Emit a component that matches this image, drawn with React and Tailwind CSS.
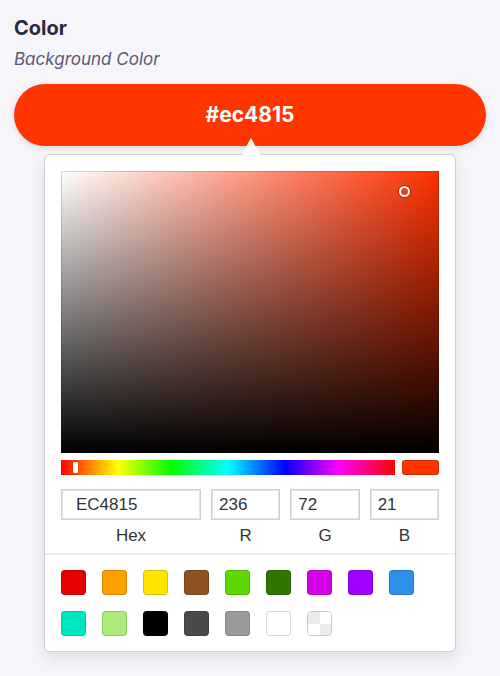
const swatches = [
  '#e60000', '#ff9f00', '#ffe500', '#8e5220', '#5fd800', '#2e7600', '#d600e6', '#a000ff', '#2e90e8',
  '#00e6c0', '#aeea7a', '#000000', '#4a4a4a', '#9b9b9b', '#ffffff',
]

function Field({ value, label, wide }) {
  return (
    <div className={wide ? 'w-[140px]' : 'flex-1'}>
      <div
        className={`flex h-[31px] items-center border border-[#cfcfcf] bg-white text-[17px] text-[#333] shadow-[inset_0_0_0_1px_#e4e4e4] ${
          wide ? 'pl-[14px]' : 'pl-[7px]'
        }`}
      >
        {value}
      </div>
      <div className="mt-[6px] text-center text-[17px] leading-[20px] text-[#333]">{label}</div>
    </div>
  )
}

export default function App() {
  return (
    <div className="min-h-screen bg-[#f5f5fa] px-[14px] pt-[14px] font-['Inter',sans-serif]">
      <h2 className="text-[20px] font-bold leading-[28px] text-[#2b2a3f]">Color</h2>
      <p className="mt-[5px] text-[17px] italic leading-[24px] text-[#5b5873]">Background Color</p>

      <button className="mt-[13px] flex h-[62px] w-full items-center justify-center rounded-full bg-[#ff3500] text-[21px] font-bold text-white shadow-[0_2px_6px_rgba(0,0,0,0.12)]">
        #ec4815
      </button>

      <div className="relative mx-[30px] mt-[8px] rounded-[6px] border border-[#d0d0d4] bg-white font-['Liberation_Sans',Arial,sans-serif] shadow-[0_6px_16px_rgba(0,0,0,0.1)]">
        <div className="absolute -top-[17px] left-[196px] h-0 w-0 border-x-[10px] border-b-[18px] border-x-transparent border-b-white" />

        <div className="px-[16px] pt-[16px] pb-[7px]">
          <div className="relative h-[282px] bg-[#ff3000]">
            <div className="absolute inset-0 bg-[linear-gradient(to_right,#fff,rgba(255,255,255,0))]" />
            <div className="absolute inset-0 bg-[linear-gradient(to_top,#000,rgba(0,0,0,0))] shadow-[inset_0_0_0_1px_rgba(0,0,0,0.15)]" />
            <div className="absolute left-[338px] top-[15px] h-[11px] w-[11px] rounded-full border-2 border-white shadow-[0_0_0_1px_rgba(0,0,0,0.35)]" />
          </div>

          <div className="mt-[7px] flex h-[15px] gap-[7px]">
            <div className="relative flex-1 bg-[linear-gradient(to_right,#f00_0%,#ff0_17%,#0f0_33%,#0ff_50%,#00f_67%,#f0f_83%,#f00_100%)]">
              <div className="absolute left-[12px] top-[2px] h-[11px] w-[5px] rounded-[1px] bg-white shadow-[0_0_1px_rgba(0,0,0,0.6)]" />
            </div>
            <div className="w-[37px] rounded-[3px] bg-[#ff3500] shadow-[inset_0_0_0_1px_rgba(0,0,0,0.18)]" />
          </div>

          <div className="mt-[14px] flex gap-[10px]">
            <Field value="EC4815" label="Hex" wide />
            <Field value="236" label="R" />
            <Field value="72" label="G" />
            <Field value="21" label="B" />
          </div>
        </div>

        <div className="border-t-2 border-[#efeff2] px-[16px] pt-[15px] pb-[15px]">
          <div className="flex flex-wrap gap-x-[16px] gap-y-[16px]">
            {swatches.map((c) => (
              <div
                key={c}
                className="h-[25px] w-[25px] rounded-[4px] shadow-[inset_0_0_0_1px_rgba(0,0,0,0.15)]"
                style={{ background: c }}
              />
            ))}
            <div className="grid h-[25px] w-[25px] grid-cols-2 grid-rows-2 overflow-hidden rounded-[4px] border border-[#c8c8c8]">
              <div className="bg-[#ebebeb]" />
              <div className="bg-white" />
              <div className="bg-white" />
              <div className="bg-[#ebebeb]" />
            </div>
          </div>
        </div>
      </div>
    </div>
  )
}
